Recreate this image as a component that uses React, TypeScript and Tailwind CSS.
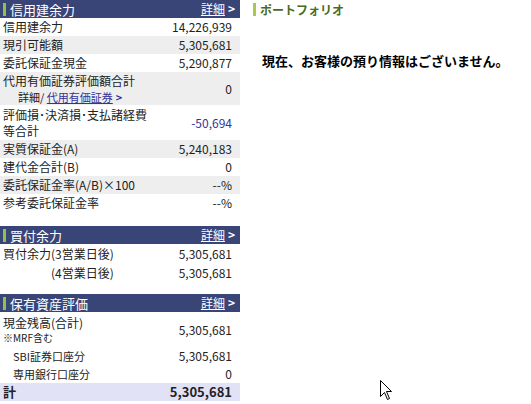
import React from 'react';

const jp = { fontFamily: '"Noto Sans CJK JP", "Liberation Sans", sans-serif' };

function SectionHeader({ title }: { title: string }) {
  return (
    <div className="flex h-[18px] items-center justify-between bg-[#3a4577] pl-[3px] pr-[5px] text-white">
      <div className="flex items-center">
        <span className="mr-[4px] h-[13px] w-[3px] bg-[#8fc24a]" />
        <span className="text-[13px] leading-none">{title}</span>
      </div>
      <a className="flex items-center text-[12px] leading-none">
        <span className="underline">詳細</span>
        <span className="ml-[3px] font-bold">&gt;</span>
      </a>
    </div>
  );
}

function Row({
  label,
  value,
  gray,
  blue,
  h = 'h-[18px]',
}: {
  label: React.ReactNode;
  value: string;
  gray?: boolean;
  blue?: boolean;
  h?: string;
}) {
  return (
    <div
      className={`flex items-center justify-between pl-[3px] pr-[8px] text-[12px] leading-[16px] ${h} ${
        gray ? 'bg-[#eeeeee]' : 'bg-white'
      }`}
    >
      <div className="text-[#222]">{label}</div>
      <div className={blue ? 'text-[#333399]' : 'text-[#222]'}>{value}</div>
    </div>
  );
}

export default function App() {
  return (
    <div className="relative flex h-[404px] w-[531px] overflow-hidden bg-white" style={jp}>
      {/* left column */}
      <div className="w-[240px] shrink-0">
        <SectionHeader title="信用建余力" />
        <Row label="信用建余力" value="14,226,939" />
        <Row label="現引可能額" value="5,305,681" gray />
        <Row label="委託保証金現金" value="5,290,877" />
        <Row
          gray
          h="h-[33px]"
          label={
            <div>
              <div>代用有価証券評価額合計</div>
              <div className="pl-[15px] text-[11px]">
                詳細/ <span className="text-[#333399] underline">代用有価証券</span>
                <span className="ml-[3px] font-bold text-[#333399]">&gt;</span>
              </div>
            </div>
          }
          value="0"
        />
        <Row
          h="h-[35px]"
          label={
            <div>
              <div>評価損･決済損･支払諸経費</div>
              <div>等合計</div>
            </div>
          }
          value="-50,694"
          blue
        />
        <Row label="実質保証金(A)" value="5,240,183" gray />
        <Row label="建代金合計(B)" value="0" />
        <Row label="委託保証金率(A/B)×100" value="--%" gray />
        <Row label="参考委託保証金率" value="--%" />

        <div className="h-[14px]" />
        <SectionHeader title="買付余力" />
        <Row h="h-[19px]" label="買付余力(3営業日後)" value="5,305,681" />
        <Row h="h-[19px]" label={<span className="pl-[48px]">(4営業日後)</span>} value="5,305,681" />

        <div className="h-[12px]" />
        <SectionHeader title="保有資産評価" />
        <Row
          h="h-[35px]"
          label={
            <div>
              <div>現金残高(合計)</div>
              <div className="text-[10px] leading-[14px]">※MRF含む</div>
            </div>
          }
          value="5,305,681"
        />
        <Row label={<span className="pl-[10px] text-[11px]">SBI証券口座分</span>} value="5,305,681" />
        <Row label={<span className="pl-[10px] text-[11px]">専用銀行口座分</span>} value="0" />
        <div className="flex h-[18px] items-center justify-between bg-[#e2e2f6] pl-[3px] pr-[8px] text-[13px] font-bold text-[#222]">
          <span>計</span>
          <span>5,305,681</span>
        </div>
      </div>

      {/* right column */}
      <div className="ml-[13px] flex-1 pt-[3px]">
        <div className="flex items-center">
          <span className="mr-[4px] h-[13px] w-[3px] bg-[#a8c84e]" />
          <span className="text-[12px] font-bold leading-none text-[#4b6a1e]">ポートフォリオ</span>
        </div>
        <div className="mt-[35px] pl-[9px] text-[13px] font-bold text-black">
          現在、お客様の預り情報はございません。
        </div>
      </div>

      {/* mouse cursor */}
      <svg className="absolute left-[380px] top-[380px]" width="13" height="21" viewBox="0 0 13 21">
        <path
          d="M0.5 0.5 L0.5 16.5 L4.5 12.5 L7.5 19.5 L9.5 18.5 L6.5 11.5 L11.5 11.5 Z"
          fill="white"
          stroke="black"
          strokeWidth="1"
        />
      </svg>
    </div>
  );
}
